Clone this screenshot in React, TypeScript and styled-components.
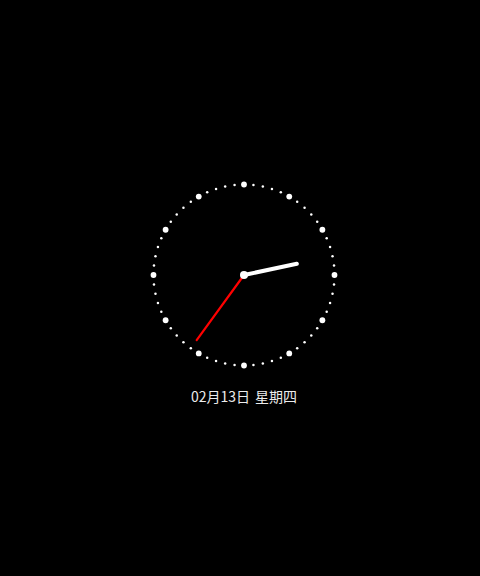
import styled, { createGlobalStyle } from 'styled-components';

const GlobalStyle = createGlobalStyle`
  html, body {
    margin: 0;
    padding: 0;
    background: #000;
  }
`;

const Screen = styled.div`
  width: 480px;
  height: 576px;
  background: #000;
  display: flex;
  flex-direction: column;
  align-items: center;
  padding: 175px 0 0 8px;
  box-sizing: border-box;
`;

const Face = styled.svg`
  width: 200px;
  height: 200px;
  display: block;
`;

const DateLine = styled.div`
  margin-top: 11px;
  font-family: 'Noto Sans CJK SC', 'Noto Sans', sans-serif;
  font-size: 14px;
  line-height: 20px;
  color: #ececec;
  white-space: pre;
  word-spacing: 2px;
`;

const C = 100;
const R = 90.5;

function Clock({ hour, minute }: { hour: number; minute: number }) {
  const ticks = Array.from({ length: 60 }, (_, i) => {
    const a = (i * 6 * Math.PI) / 180;
    const big = i % 5 === 0;
    return (
      <circle
        key={i}
        cx={C + R * Math.sin(a)}
        cy={C - R * Math.cos(a)}
        r={big ? 2.9 : 1.25}
        fill="#fff"
      />
    );
  });
  const hourA = (((hour % 12) + minute / 60) * 30 * Math.PI) / 180;
  const minA = (minute * 6 * Math.PI) / 180;
  return (
    <Face viewBox="0 0 200 200">
      {ticks}
      <line
        x1={C}
        y1={C}
        x2={C + 80.5 * Math.sin(minA)}
        y2={C - 80.5 * Math.cos(minA)}
        stroke="#ff0000"
        strokeWidth={2.2}
        strokeLinecap="round"
      />
      <line
        x1={C}
        y1={C}
        x2={C + 54 * Math.sin(hourA)}
        y2={C - 54 * Math.cos(hourA)}
        stroke="#fff"
        strokeWidth={4}
        strokeLinecap="round"
      />
      <circle cx={C} cy={C} r={4} fill="#fff" />
    </Face>
  );
}

export default function App() {
  return (
    <>
      <GlobalStyle />
      <Screen>
        <Clock hour={2} minute={36} />
        <DateLine>02月13日 星期四</DateLine>
      </Screen>
    </>
  );
}
